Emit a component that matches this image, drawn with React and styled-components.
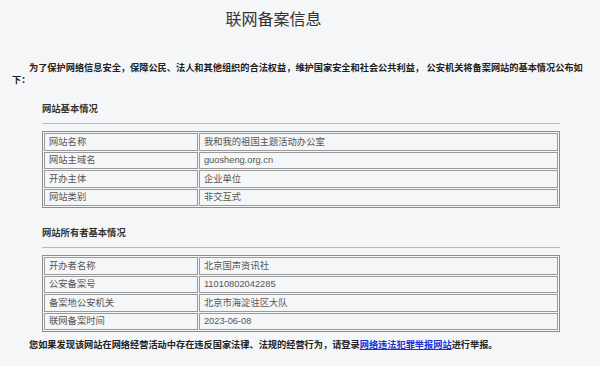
import React from 'react'
import styled, { createGlobalStyle } from 'styled-components'

const GlobalStyle = createGlobalStyle`
  html, body {
    margin: 0;
    padding: 0;
    background-color: #f5f6f8;
  }
  body {
    font-family: "Liberation Sans", "Noto Sans CJK SC", sans-serif;
  }
`

const Page = styled.div`
  width: 600px;
  height: 366px;
  padding: 0 12px;
  box-sizing: border-box;
  background-color: #f5f6f8;
  overflow: hidden;
`
const Title = styled.h1`
  margin: 8px 0 0;
  padding-right: 53px;
  font-family: "Noto Sans CJK SC", sans-serif;
  font-size: 16px;
  line-height: 20px;
  font-weight: 400;
  color: #333;
  text-align: center;
`
const Notice = styled.p`
  margin: ${props => props.top}px -8px 0 0;
  font-family: "Liberation Sans", "Noto Sans CJK SC", sans-serif;
  font-size: 9.2px;
  line-height: 12px;
  font-weight: 700;
  color: #222;
  text-indent: 17px;
`
const Section = styled.section`
  margin: 0 28px 0 30px;
`
const SectionTitle = styled.h2`
  margin: ${props => props.top}px 0 0;
  font-family: "Noto Sans CJK SC", sans-serif;
  font-size: 9.3px;
  line-height: 12px;
  font-weight: 700;
  color: #333;
`
const Rule = styled.hr`
  margin: 9px 0 0;
  height: 0;
  border: none;
  border-top: 1px solid #b8b8b8;
`
const InfoTable = styled.table`
  width: 100%;
  margin-top: 7px;
  border: 1px solid #8c8c8c;
  border-spacing: 1px;
  table-layout: fixed;
`
const Cell = styled.td`
  height: 17.5px;
  padding: 0 4px;
  box-sizing: border-box;
  border: 1px solid #9a9a9a;
  font-family: "Liberation Sans", "Noto Sans CJK SC", sans-serif;
  font-size: 9.3px;
  line-height: 12px;
  color: #555;
  width: ${props => props.label ? '30%' : 'auto'};
  white-space: nowrap;
`
const ReportLink = styled.a`
  color: #1d2fd6;
  text-decoration: underline;
`

const siteInfo = [
  ['网站名称', '我和我的祖国主题活动办公室'],
  ['网站主域名', 'guosheng.org.cn'],
  ['开办主体', '企业单位'],
  ['网站类别', '非交互式']
]

const ownerInfo = [
  ['开办者名称', '北京国声资讯社'],
  ['公安备案号', '11010802042285'],
  ['备案地公安机关', '北京市海淀驻区大队'],
  ['联网备案时间', '2023-06-08']
]

const InfoBlock = ({ title, rows, top }) => (
  <Section>
    <SectionTitle top={top}>{title}</SectionTitle>
    <Rule />
    <InfoTable>
      <tbody>
        {rows.map(([label, value]) => (
          <tr key={label}>
            <Cell label>{label}</Cell>
            <Cell>{value}</Cell>
          </tr>
        ))}
      </tbody>
    </InfoTable>
  </Section>
)

const App = () => (
  <Page>
    <GlobalStyle />
    <Title>联网备案信息</Title>
    <Notice top={34}>
      为了保护网络信息安全，保障公民、法人和其他组织的合法权益，维护国家安全和社会公共利益， 公安机关将备案网站的基本情况公布如下：
    </Notice>
    <InfoBlock title='网站基本情况' rows={siteInfo} top={16} />
    <InfoBlock title='网站所有者基本情况' rows={ownerInfo} top={18} />
    <Notice top={7}>
      您如果发现该网站在网络经营活动中存在违反国家法律、法规的经营行为，请登录<ReportLink href='#'>网络违法犯罪举报网站</ReportLink>进行举报。
    </Notice>
  </Page>
)

export default App
